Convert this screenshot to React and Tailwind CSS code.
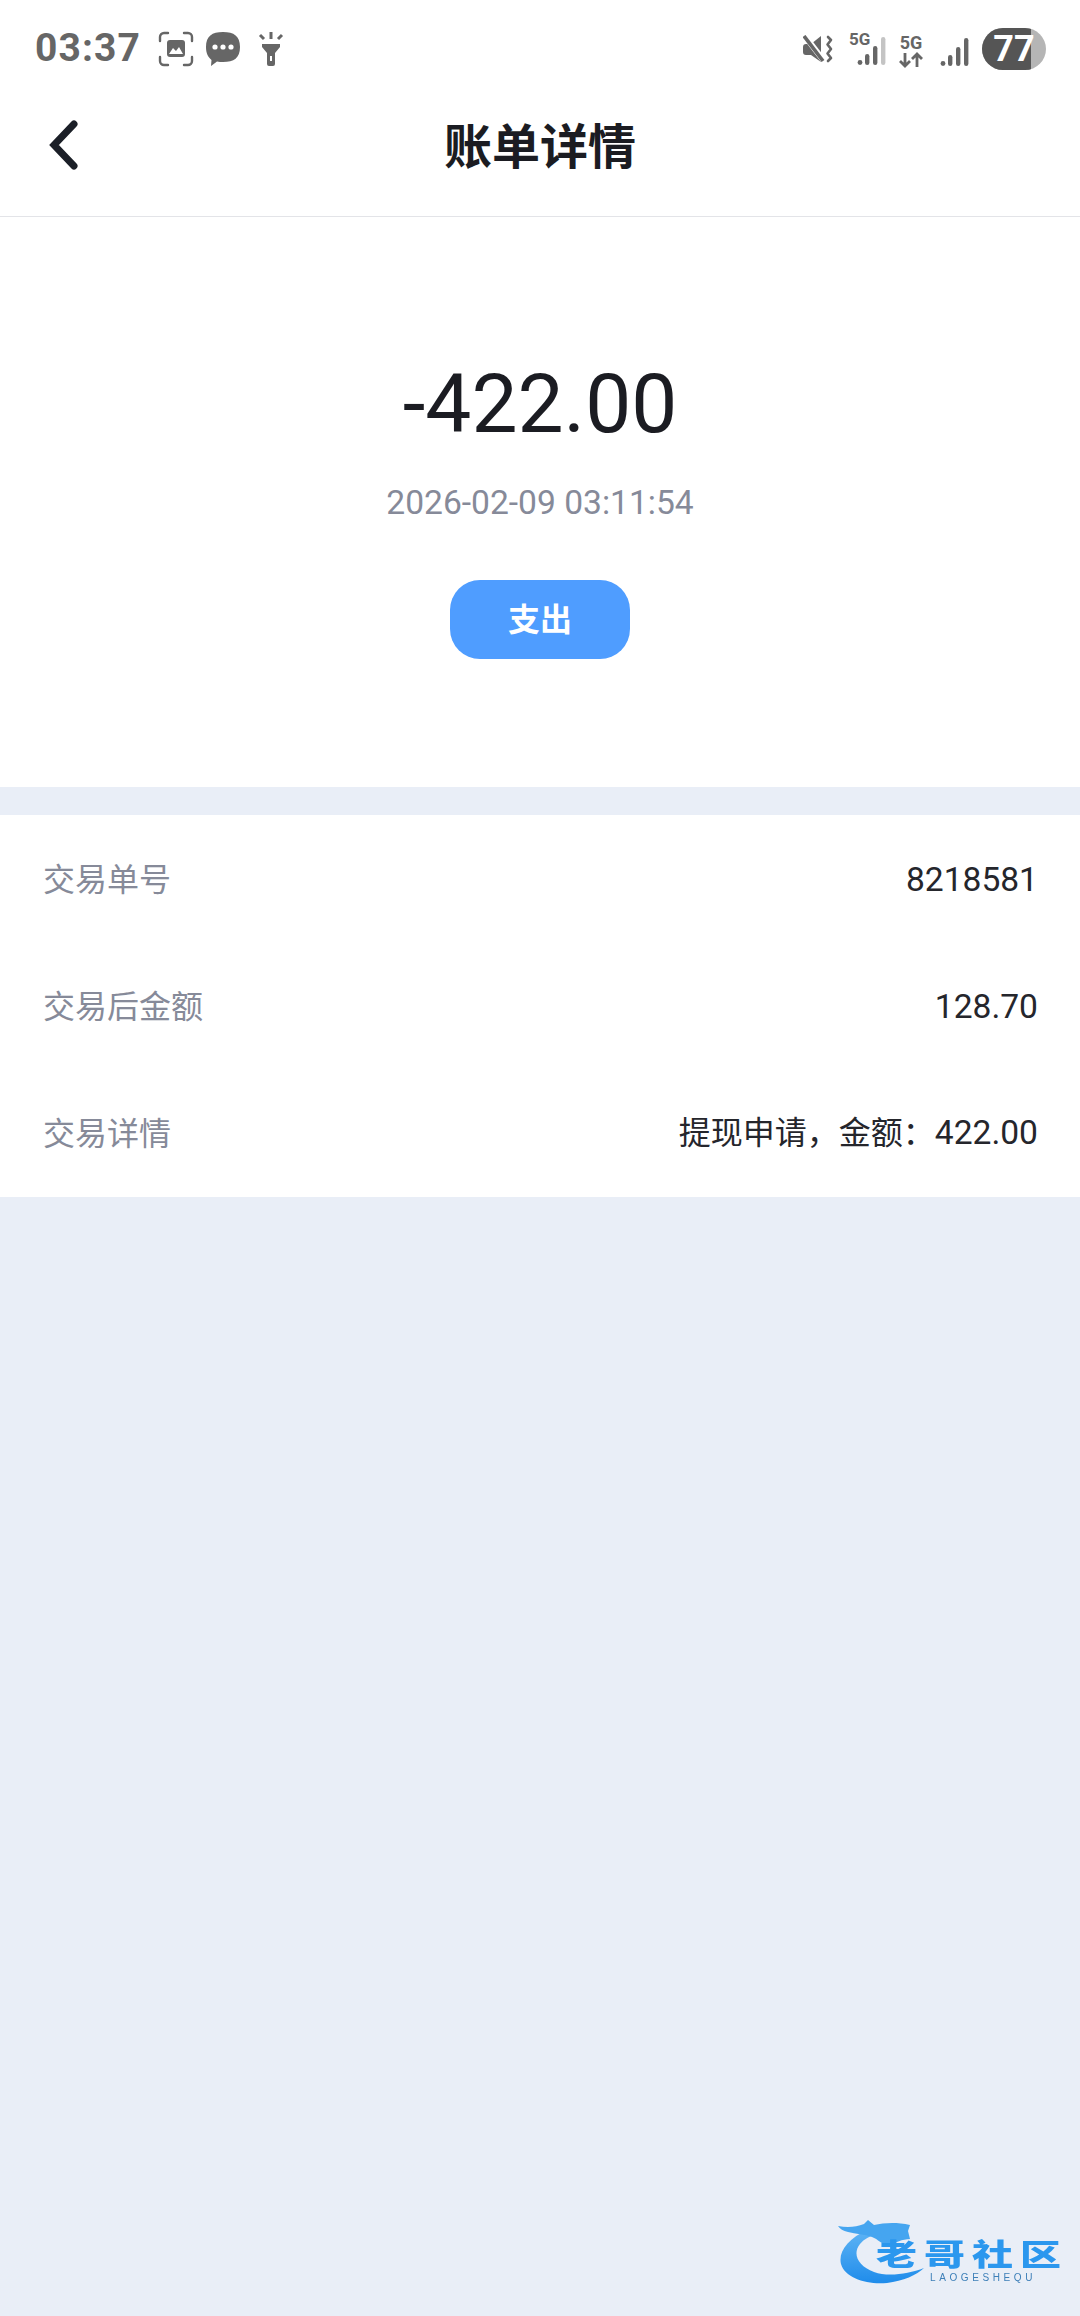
import React from "react";

const CJK = "font-['Roboto','Noto_Sans_CJK_SC',sans-serif]";

const StatusLeft = () => (
  <div className="flex items-center">
    <span className="font-['Roboto',sans-serif] text-[39px] leading-none font-bold text-[#666666] w-[123px] tracking-[1.1px]">03:37</span>
    {/* screenshot */}
    <svg width="36" height="36" viewBox="0 0 36 36">
      <path d="M10 2H6a4 4 0 0 0-4 4v4M26 2h4a4 4 0 0 1 4 4v4M10 34H6a4 4 0 0 1-4-4v-4M26 34h4a4 4 0 0 0 4-4v-4" fill="none" stroke="#666" strokeWidth="2.4" strokeLinecap="round" />
      <rect x="9" y="9" width="18" height="17" rx="3" fill="#666" />
      <path d="M11 23l4-6 3 3 3-4 4 7z" fill="#fff" />
    </svg>
    {/* message */}
    <svg width="36" height="36" viewBox="0 0 36 36" className="ml-[11px]">
      <path d="M18 1c11 0 17 4 17 15s-6 15-17 15c-2 0-4 0-6-.5L6 35l.5-6C3 26 1 22 1 16 1 5 7 1 18 1z" fill="#666" />
      <circle cx="10" cy="16" r="2.6" fill="#fff" />
      <circle cx="18" cy="16" r="2.6" fill="#fff" />
      <circle cx="26" cy="16" r="2.6" fill="#fff" />
    </svg>
    {/* flashlight */}
    <svg width="28" height="34" viewBox="0 0 28 34" className="ml-[16px]">
      <path d="M5 12h18v3l-5 6v11a2 2 0 0 1-2 2h-4a2 2 0 0 1-2-2V21l-5-6z" fill="#666" />
      <rect x="13" y="24" width="2" height="5" fill="#fff" />
      <rect x="12.5" y="0" width="3" height="7" fill="#666" />
      <path d="M3 3l4 4M25 3l-4 4" stroke="#666" strokeWidth="3" />
    </svg>
  </div>
);

const Bars = ({ dim = false }) => (
  <svg width="30" height="28" viewBox="0 0 30 28">
    <circle cx="3" cy="25.5" r="2.4" fill="#666" />
    <rect x="8" y="17" width="4.4" height="11" rx="2.2" fill="#666" />
    <rect x="16" y="9" width="4.4" height="19" rx="2.2" fill="#666" />
    <rect x="24" y="0" width="4.4" height="28" rx="2.2" fill={dim ? "#c4c4c4" : "#666"} />
  </svg>
);

const StatusRight = () => (
  <div className="flex items-center">
    {/* muted vibrate */}
    <svg width="30" height="28" viewBox="0 0 30 28">
      <path d="M0 12a3 3 0 0 1 3-3h5L18 1v26L8 20H3a3 3 0 0 1-3-3z" fill="#666" />
      <path d="M1 0l20 26" stroke="#fff" strokeWidth="6" />
      <path d="M1 1l19 25" stroke="#666" strokeWidth="3.6" />
      <path d="M25 2l3 3-3.5 4.5 3.5 4.5-3.5 4.5 3.5 4.5-3 3" fill="none" stroke="#666" strokeWidth="2.6" strokeLinecap="round" strokeLinejoin="round" />
    </svg>
    <div className="relative w-[38px] h-[33px] ml-[16px]">
      <span className="absolute left-0 top-[-1px] font-['Roboto',sans-serif] text-[17px] font-bold leading-none text-[#666666]">5G</span>
      <div className="absolute right-0 bottom-0 flex"><Bars dim /></div>
    </div>
    <div className="flex flex-col items-center w-[26px] ml-[11px] mt-[4px] text-[#666666]">
      <span className="font-['Roboto',sans-serif] text-[18px] font-bold leading-[18px]">5G</span>
      <svg width="26" height="16" viewBox="0 0 26 16">
        <path d="M7 1v13M2 9l5 5 5-5M19 15V2M14 7l5-5 5 5" fill="none" stroke="#666" strokeWidth="2.8" />
      </svg>
    </div>
    <div className="ml-[16px] flex self-end mb-[4px]"><Bars /></div>
    <div className="ml-[12px] relative w-[64px] h-[42px] rounded-full bg-[#b5b5b5] overflow-hidden">
      <div className="absolute left-0 top-0 bottom-0 w-[49px] bg-[#555555]" />
      <span className="relative block text-center w-[60px] ml-[2px] font-['Roboto',sans-serif] text-[36px] leading-[42px] font-bold text-white">77</span>
    </div>
  </div>
);

const Num = ({ children }) => <span className="text-[33.6px]">{children}</span>;

const Row = ({ label, children }) => (
  <div className="h-[127px] flex items-center justify-between pl-[43px] pr-[42px]">
    <span className="text-[32px] text-[#868a99]">{label}</span>
    <span className="text-[32px] text-[#25262c]">{children}</span>
  </div>
);

const Logo = () => (
  <div className="relative w-[226px] h-[70px] blur-[0.7px]">
    <svg width="226" height="70" viewBox="0 0 226 70" className="absolute inset-0">
      <defs>
        <linearGradient id="dragon" x1="0" y1="0" x2="0" y2="1">
          <stop offset="0" stopColor="#5fb4f4" />
          <stop offset="1" stopColor="#1f8ceb" />
        </linearGradient>
      </defs>
      <path d="M32 12C12 20 2 34 5 46c4 14 26 21 46 19 16-2 30-8 37-15-16 6-36 9-50 4C22 48 16 36 24 26c4-5 10-8 16-10z" fill="url(#dragon)" />
      <path d="M2 8c10 2 18 1 26-2l4-4 6 5c10-2 22-3 36 0l-2 6 2 8c-8 0-14 4-22 6-6 0-10-6-16-8-8-3-16-3-24-5C7 13 4 11 2 8z" fill="#45a5f0" />
    </svg>
    <div className="absolute left-[40px] top-[14px] origin-center scale-y-[0.72] font-['Noto_Sans_CJK_SC',sans-serif] font-black text-[41px] leading-none text-[#2b97ee] tracking-[7px] whitespace-nowrap">老哥社区</div>
    <div className="absolute left-[94px] top-[55px] font-['Liberation_Sans',sans-serif] text-[10px] leading-none text-[#3d7fb8] tracking-[3.6px] whitespace-nowrap">LAOGESHEQU</div>
  </div>
);

export default function App() {
  return (
    <div className={`w-[1080px] h-[2316px] bg-[#e9eef7] flex flex-col ${CJK}`}>
      <div className="bg-white border-b border-[#e3e4e8]">
        <div className="h-[97px] flex items-center justify-between pl-[35px] pr-[34px]">
          <StatusLeft />
          <StatusRight />
        </div>
        <div className="h-[119px] relative flex items-center justify-center pb-[18px]">
          <svg width="34" height="54" viewBox="0 0 34 54" className="absolute left-[47px] top-[21px]">
            <path d="M27 6L7 27l20 21" fill="none" stroke="#1b1f27" strokeWidth="7" strokeLinecap="round" strokeLinejoin="miter" />
          </svg>
          <span className="text-[48px] font-bold text-[#1b1c22] leading-none">账单详情</span>
        </div>
      </div>

      <div className="bg-white h-[570px] flex flex-col items-center">
        <div className="mt-[137px] text-[82px] leading-[100px] text-[#1b1c22]">-422.00</div>
        <div className="mt-[27px] text-[33.6px] leading-[44px] text-[#868a99]">2026-02-09 03:11:54</div>
        <div className="mt-[55px] w-[180px] h-[79px] rounded-[30px] bg-[#4f9dff] flex items-center justify-center text-[32px] font-bold text-white">支出</div>
      </div>

      <div className="mt-[28px] bg-white h-[382px] flex flex-col pt-[2px]">
        <Row label="交易单号"><Num>8218581</Num></Row>
        <Row label="交易后金额"><Num>128.70</Num></Row>
        <Row label="交易详情">提现申请，金额：<Num>422.00</Num></Row>
      </div>

      <div className="mt-auto flex justify-end pr-[18px] pb-[28px]">
        <Logo />
      </div>
    </div>
  );
}
